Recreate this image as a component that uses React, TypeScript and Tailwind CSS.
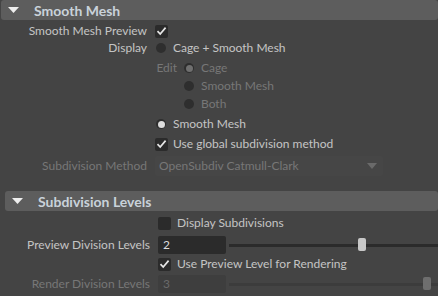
import type { ReactNode } from "react";

const font = { fontFamily: "Lato, 'Liberation Sans', sans-serif" };

const Check = ({ checked, dim }: { checked?: boolean; dim?: boolean }) => (
  <div className="flex h-[13px] w-[13px] shrink-0 items-center justify-center rounded-[2px] bg-[#2b2b2b]">
    {checked && (
      <svg width="11" height="10" viewBox="0 0 11 10">
        <path
          d="M1.5 5.2 L4.2 8 L9.6 1.6"
          fill="none"
          stroke={dim ? "#7a7a7a" : "#e6e6e6"}
          strokeWidth="1.7"
        />
      </svg>
    )}
  </div>
);

const Radio = ({ dot }: { dot?: string }) => (
  <div className="flex h-[10px] w-[10px] shrink-0 items-center justify-center rounded-full bg-[#2e2e2e]">
    {dot && <div className="h-[7px] w-[7px] rounded-full" style={{ background: dot }} />}
  </div>
);

const Row = ({
  label,
  dim,
  top,
  width = 147,
  children,
}: {
  label?: string;
  dim?: boolean;
  top: string;
  width?: number;
  children: ReactNode;
}) => (
  <div className={`flex h-4 items-center ${top}`}>
    <div
      className={`shrink-0 text-right ${dim ? "text-[#777777]" : "text-[#c4c4c4]"}`}
      style={{ width }}
    >
      {label}
    </div>
    <div className="ml-2 flex flex-1 items-center">{children}</div>
  </div>
);

const Header = ({ title, indent }: { title: string; indent: string }) => (
  <div className={`flex h-5 items-center rounded-[3px] bg-[#5d5d5d] ${indent}`}>
    <svg className="ml-[7px]" width="11" height="6" viewBox="0 0 11 6">
      <path d="M0 0 H11 L5.5 6 Z" fill="#eeeeee" />
    </svg>
    <span className="ml-[15px] text-[14px] font-bold text-[#c9d2da]">{title}</span>
  </div>
);

const Slider = ({ pos, dim }: { pos: number; dim?: boolean }) => (
  <div className="relative ml-[3px] h-[14px] flex-1">
    <div
      className={`absolute left-0 right-0 top-[6px] h-[3px] ${dim ? "bg-[#3c3c3c]" : "bg-[#2b2b2b]"}`}
    />
    <div
      className={`absolute top-0 h-[13px] w-[8px] rounded-[2px] ${dim ? "bg-[#6e6e6e]" : "bg-[#c8c8c8]"}`}
      style={{ left: pos }}
    />
  </div>
);

export default function App() {
  return (
    <div className="h-[296px] w-[438px] overflow-hidden bg-[#444444] text-[12px]" style={font}>
      <Header title="Smooth Mesh" indent="ml-px" />

      <Row label="Smooth Mesh Preview" top="mt-[3px]">
        <Check checked />
      </Row>

      <Row label="Display" top="mt-px">
        <div className="ml-px flex items-center gap-[7px] text-[#c4c4c4]">
          <Radio />
          <span>Cage + Smooth Mesh</span>
        </div>
      </Row>

      <Row top="mt-[4px]">
        <div className="flex items-center text-[#777777]">
          <span className="w-[22px] text-right">Edit</span>
          <div className="ml-[7px] flex items-center gap-[7px]">
            <Radio dot="#6f6f6f" />
            <span>Cage</span>
          </div>
        </div>
      </Row>

      <Row top="mt-[2px]">
        <div className="ml-[29px] flex items-center gap-[7px] text-[#777777]">
          <Radio />
          <span>Smooth Mesh</span>
        </div>
      </Row>

      <Row top="mt-[2px]">
        <div className="ml-[29px] flex items-center gap-[7px] text-[#777777]">
          <Radio />
          <span>Both</span>
        </div>
      </Row>

      <Row top="mt-[4px]">
        <div className="ml-px flex items-center gap-[7px] text-[#c4c4c4]">
          <Radio dot="#dddddd" />
          <span>Smooth Mesh</span>
        </div>
      </Row>

      <Row top="mt-[4px]">
        <div className="flex items-center gap-[5px] text-[#c4c4c4]">
          <Check checked />
          <span>Use global subdivision method</span>
        </div>
      </Row>

      <Row label="Subdivision Method" dim top="mt-[6px]">
        <div className="flex h-[20px] w-[228px] items-center justify-between rounded-[2px] bg-[#464646] pl-1 pr-[6px] text-[#777777]">
          <span>OpenSubdiv Catmull-Clark</span>
          <svg width="10" height="6" viewBox="0 0 10 6">
            <path d="M0 0 H10 L5 6 Z" fill="#6a6a6a" />
          </svg>
        </div>
      </Row>

      <div className="mt-[17px]">
        <Header title="Subdivision Levels" indent="ml-[5px]" />
      </div>

      <Row width={150} top="mt-[4px]">
        <div className="flex items-center gap-[6px] text-[#c4c4c4]">
          <Check />
          <span>Display Subdivisions</span>
        </div>
      </Row>

      <div className="mt-[5px] flex h-[18px] items-center">
        <div className="w-[150px] shrink-0 text-right text-[#c4c4c4]">Preview Division Levels</div>
        <div className="ml-2 flex flex-1 items-center">
          <div className="flex h-[18px] w-[68px] items-center rounded-[2px] bg-[#2b2b2b] pl-[5px] text-[#dddddd]">
            2
          </div>
          <Slider pos={129} />
        </div>
      </div>

      <Row width={150} top="mt-[2px]">
        <div className="flex items-center gap-[6px] text-[#c4c4c4]">
          <Check checked />
          <span>Use Preview Level for Rendering</span>
        </div>
      </Row>

      <div className="mt-[3px] flex h-[18px] items-center">
        <div className="w-[150px] shrink-0 text-right text-[#777777]">Render Division Levels</div>
        <div className="ml-2 flex flex-1 items-center">
          <div className="flex h-[18px] w-[68px] items-center rounded-[2px] bg-[#3e3e3e] pl-[5px] text-[#6a6a6a]">
            3
          </div>
          <Slider pos={194} dim />
        </div>
      </div>
    </div>
  );
}
